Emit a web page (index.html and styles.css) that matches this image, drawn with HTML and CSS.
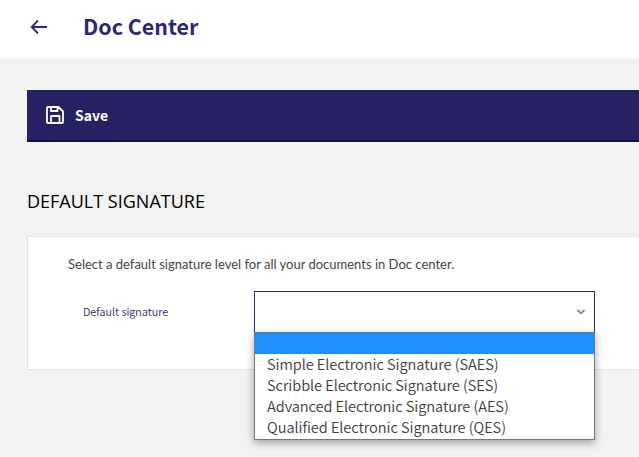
FILE: index.html
```html
<!DOCTYPE html>
<html lang="en">
<head>
<meta charset="utf-8">
<title>Doc Center</title>
<link rel="stylesheet" href="styles.css">
</head>
<body>
<header class="topbar">
  <svg class="back" width="18" height="16" viewBox="0 0 18 16"><path d="M8 1.500 1.700 8 8 14.500M1.700 8H17"/></svg>
  <h1 class="title">Doc Center</h1>
</header>
<main class="content">
  <div class="toolbar">
    <svg class="save-icon" width="18" height="18" viewBox="0 0 18 18"><path d="M2 1H12.5L17 5.500V16Q17 17 16 17H2Q1 17 1 16V2Q1 1 2 1ZM5 1V5H11.500V1M5 17V10H13.500V17"/></svg>
    <span class="save">Save</span>
  </div>
  <h2 class="section">DEFAULT SIGNATURE</h2>
  <section class="card">
    <p class="intro">Select a default signature level for all your documents in Doc center.</p>
    <div class="field">
      <label class="label">Default signature</label>
      <div class="select">
        <svg class="chevron" width="10" height="6" viewBox="0 0 10 6"><path d="M1.500 1 5 4.300 8.500 1"/></svg>
        <ul class="menu">
          <li class="option active"></li>
          <li class="option">Simple Electronic Signature (SAES)</li>
          <li class="option">Scribble Electronic Signature (SES)</li>
          <li class="option">Advanced Electronic Signature (AES)</li>
          <li class="option">Qualified Electronic Signature (QES)</li>
        </ul>
      </div>
    </div>
  </section>
</main>
</body>
</html>
```
FILE: styles.css
```css
* { box-sizing: border-box; }
body {
  margin: 0;
  height: 457px;
  overflow: hidden;
  background: #f2f2f2;
  font-family: "Noto Sans CJK JP", "Noto Sans", sans-serif;
}
h1, h2, p, ul { margin: 0; padding: 0; font-weight: 400; }
svg { display: block; fill: none; flex: none; }
.topbar {
  height: 58px;
  padding: 0 0 4px 30px;
  display: flex;
  align-items: center;
  background: #fff;
}
.back { stroke: #2f2674; stroke-width: 1.8; }
.title {
  margin-left: 35px;
  padding-bottom: 3px;
  color: #2f2674;
  font-size: 21.4px;
  font-weight: 700;
  line-height: 34px;
}
.content { padding: 32px 0 0 27px; }
.toolbar {
  height: 52px;
  padding-left: 19px;
  display: flex;
  align-items: center;
  gap: 11px;
  background: #262163;
  border-bottom: 2px solid #150f48;
}
.save-icon { stroke: #fff; stroke-width: 1.8; stroke-linejoin: round; }
.save { color: #fff; font-size: 14px; font-weight: 700; line-height: 22px; }
.section {
  margin-top: 47px;
  height: 47px;
  font-family: "Open Sans", "Noto Sans", sans-serif;
  font-size: 18px;
  line-height: 24px;
  color: #000;
}
.card {
  height: 134px;
  margin-right: -2px;
  padding: 17px 0 0 40px;
  background: #fff;
  border: 1px solid #e4e4e4;
}
.intro { font-family: Lato, sans-serif; font-size: 13px; line-height: 20px; color: #444; }
.field { display: flex; align-items: center; margin-top: 17px; padding-left: 15px; }
.label { width: 171px; padding-bottom: 2px; font-size: 10.8px; font-weight: 350; line-height: 16px; color: #332d60; }
.select {
  position: relative;
  width: 341px;
  height: 42px;
  padding-right: 8px;
  display: flex;
  align-items: center;
  justify-content: flex-end;
  border: 1px solid #2f2674;
  background: #fff;
}
.chevron { stroke: #858585; stroke-width: 1.8; }
.menu {
  position: absolute;
  left: -1px;
  top: 40px;
  width: 341px;
  height: 108px;
  list-style: none;
  background: #fff;
  border: 1px solid #767676;
  box-shadow: 0 3px 8px rgba(0, 0, 0, .35);
}
.option { height: 21px; padding-left: 12px; font-size: 14.6px; font-weight: 350; letter-spacing: -.06px; line-height: 20px; color: #3c3c3c; white-space: nowrap; }
.active { background: #1e90ff; }
```
